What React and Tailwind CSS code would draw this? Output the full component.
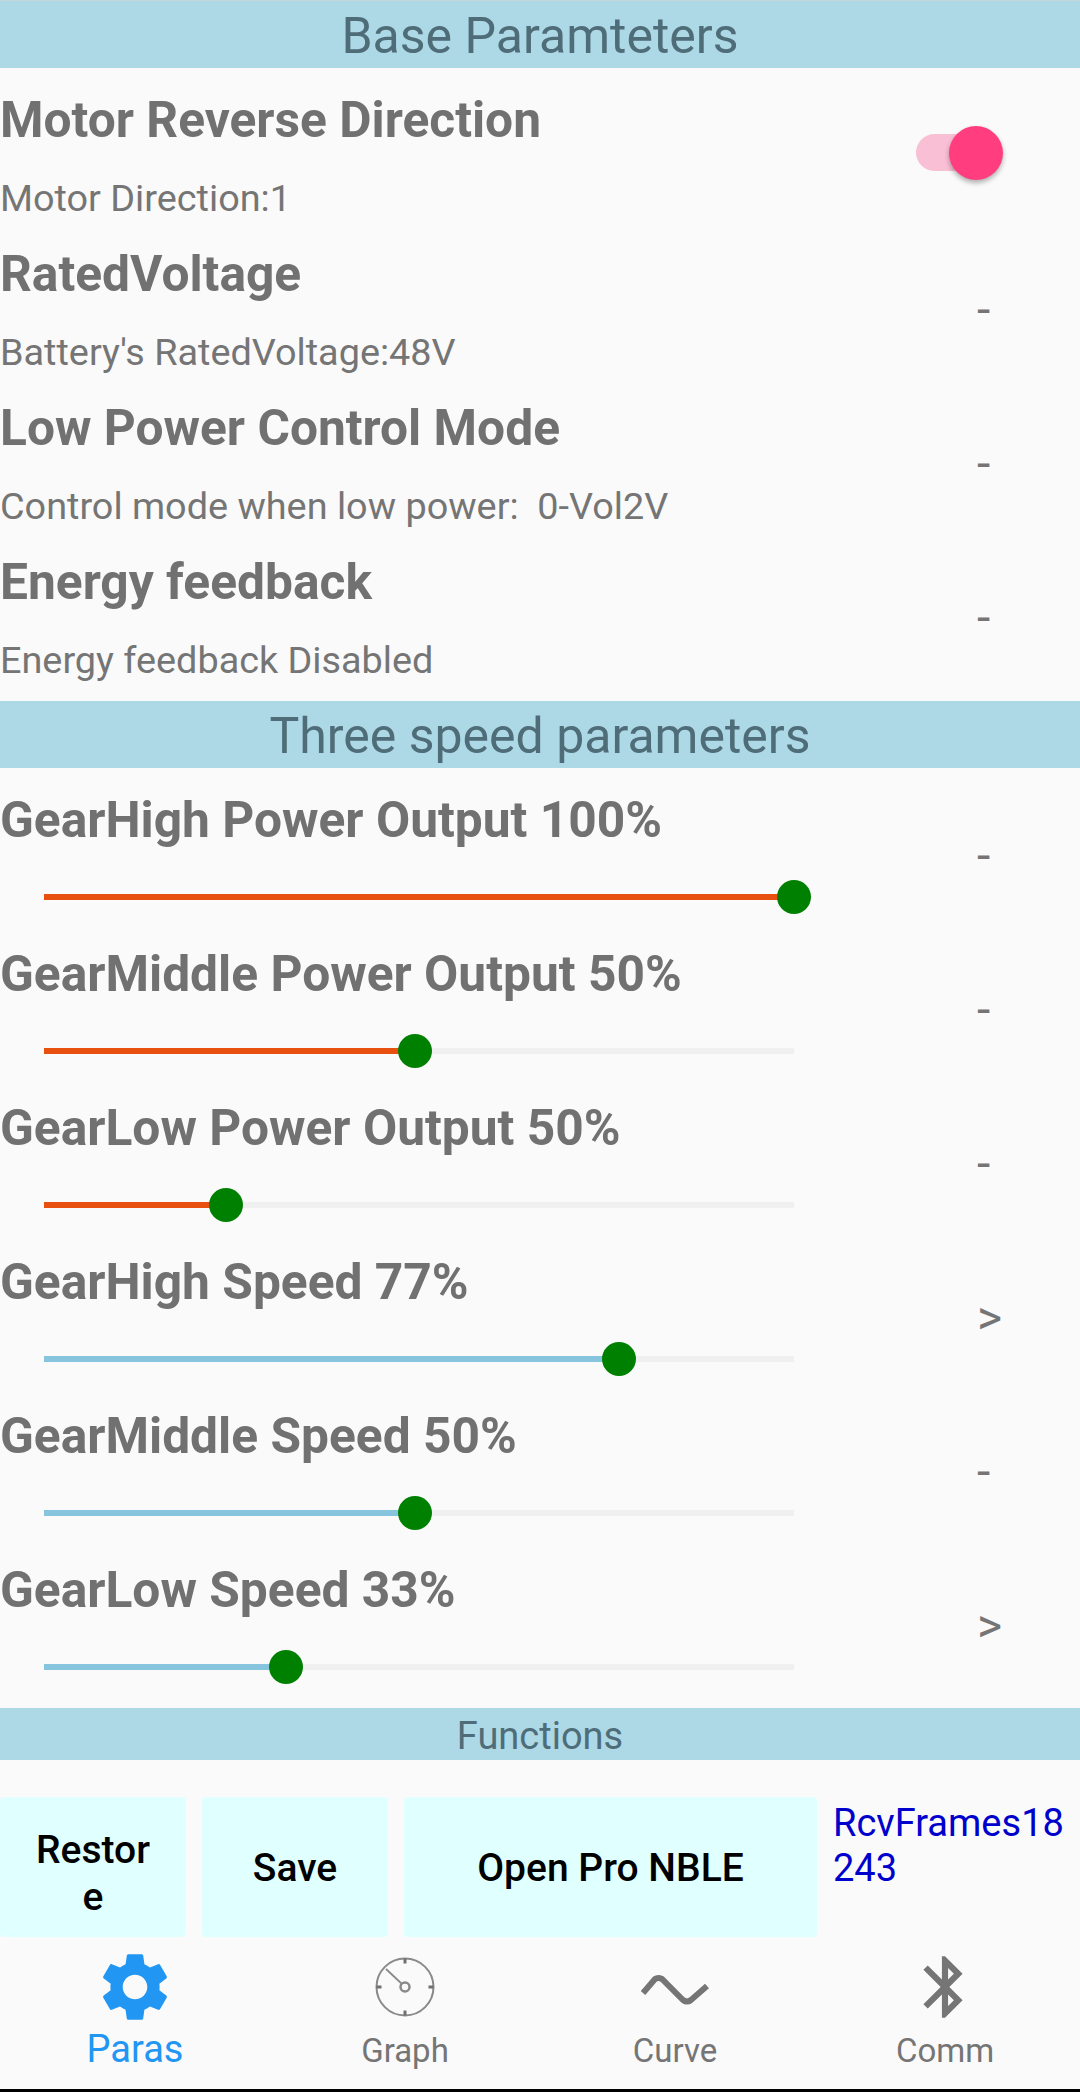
import React from 'react';

const baseParams = [
  { title: 'Motor Reverse Direction', sub: 'Motor Direction:1', toggle: true },
  { title: 'RatedVoltage', sub: "Battery's RatedVoltage:48V", mark: '-' },
  { title: 'Low Power Control Mode', sub: 'Control mode when low power:  0-Vol2V', mark: '-' },
  { title: 'Energy feedback', sub: 'Energy feedback Disabled', mark: '-' },
];

const speedParams = [
  { title: 'GearHigh Power Output 100%', value: 100, fill: 'bg-[#e8500f]', mark: '-' },
  { title: 'GearMiddle Power Output 50%', value: 49.5, fill: 'bg-[#e8500f]', mark: '-' },
  { title: 'GearLow Power Output 50%', value: 24.2, fill: 'bg-[#e8500f]', mark: '-' },
  { title: 'GearHigh Speed 77%', value: 76.7, fill: 'bg-[#87c5de]', mark: '>' },
  { title: 'GearMiddle Speed 50%', value: 49.5, fill: 'bg-[#87c5de]', mark: '-' },
  { title: 'GearLow Speed 33%', value: 32.2, fill: 'bg-[#87c5de]', mark: '>' },
];

const SectionHeader = ({ children }) => (
  <div className="h-[67px] shrink-0 bg-[#add8e6] flex items-center justify-center pt-[3px] text-[50px] leading-none text-[#4f6d78]">
    {children}
  </div>
);

const Mark = ({ children }) => (
  <div className="w-[103px] shrink-0 pb-[10px] text-[48px] leading-none text-[#757575]">{children}</div>
);

const Toggle = () => (
  <div className="relative w-[87px] h-[54px] mr-[77px] mb-[17px] shrink-0">
    <div className="absolute left-0 top-[8px] w-[70px] h-[37px] rounded-full bg-[#f9bfd4]" />
    <div className="absolute right-0 top-0 w-[54px] h-[54px] rounded-full bg-[#ff3d7f] shadow-[0_3px_5px_rgba(0,0,0,0.3)]" />
  </div>
);

const Slider = ({ value, fill }) => (
  <div className="relative ml-[44px] w-[750px] h-[6px] bg-[#f0f0f0]">
    <div className={`h-full ${fill}`} style={{ width: `${value}%` }} />
    <div
      className="absolute top-[-14px] ml-[-17px] w-[34px] h-[34px] rounded-full bg-[#008000]"
      style={{ left: `${value}%` }}
    />
  </div>
);

const Row = ({ title, children, right }) => (
  <div className="h-[154px] flex items-center justify-between">
    <div className="flex-1 min-w-0">
      <div className="h-[72px] text-[49.7px] leading-[73px] font-bold text-[#717171] whitespace-nowrap">{title}</div>
      <div className="h-[82px] flex flex-col justify-center">{children}</div>
    </div>
    {right}
  </div>
);

const ActionButton = ({ className, children }) => (
  <button className={`h-[140px] shrink-0 rounded-[4px] bg-[#e0ffff] text-[39px] leading-[47px] font-medium text-black ${className}`}>
    {children}
  </button>
);

const GearIcon = () => (
  <svg viewBox="0 0 24 24" className="w-[82px] h-[82px] fill-[#2196f3]">
    <path d="M19.14 12.94c.04-.3.06-.61.06-.94 0-.32-.02-.64-.07-.94l2.03-1.58c.18-.14.23-.41.12-.61l-1.92-3.32c-.12-.22-.37-.29-.59-.22l-2.39.96c-.5-.38-1.03-.7-1.62-.94l-.36-2.54c-.04-.24-.24-.41-.48-.41h-3.84c-.24 0-.43.17-.47.41l-.36 2.54c-.59.24-1.13.57-1.62.94l-2.39-.96c-.22-.08-.47 0-.59.22L2.74 8.87c-.12.21-.08.47.12.61l2.03 1.58c-.05.3-.09.63-.09.94s.02.64.07.94l-2.03 1.58c-.18.14-.23.41-.12.61l1.92 3.32c.12.22.37.29.59.22l2.39-.96c.5.38 1.03.7 1.62.94l.36 2.54c.05.24.24.41.48.41h3.84c.24 0 .44-.17.47-.41l.36-2.54c.59-.24 1.13-.56 1.62-.94l2.39.96c.22.08.47 0 .59-.22l1.92-3.32c.12-.22.07-.47-.12-.61l-2.01-1.58zM12 15.6c-1.98 0-3.6-1.62-3.6-3.6s1.62-3.6 3.6-3.6 3.6 1.62 3.6 3.6-1.62 3.6-3.6 3.6z" />
  </svg>
);

const GaugeIcon = () => (
  <svg viewBox="0 0 64 64" className="w-[64px] h-[64px] fill-none stroke-[#8a8a8a]">
    <circle cx="32" cy="32" r="28.5" strokeWidth="2" />
    <circle cx="32" cy="32" r="4.5" strokeWidth="2.5" />
    <path d="M29 29 L13 14" strokeWidth="1.8" />
    <path d="M32 3.5v5M32 55.5v5M3.5 32h5M55.5 32h5" strokeWidth="3" stroke="#707070" />
  </svg>
);

const WaveIcon = () => (
  <svg viewBox="0 0 68 32" className="mt-[6px] w-[68px] h-[32px] fill-none stroke-[#757575]">
    <path d="M2 19 L14 5 Q17 3 21 5 L42 26 Q46 29 50 26 L66 12" strokeWidth="6" />
  </svg>
);

const BluetoothIcon = () => (
  <svg viewBox="0 0 24 24" className="w-[74px] h-[74px] fill-[#757575]">
    <path d="M17.71 7.71L12 2h-1v7.59L6.41 5 5 6.41 10.59 12 5 17.59 6.41 19 11 14.41V22h1l5.71-5.71-4.3-4.29 4.3-4.29zM13 5.83l1.88 1.88L13 9.59V5.83zm1.88 10.46L13 18.17v-3.76l1.88 1.88z" />
  </svg>
);

const Tab = ({ icon, label, active }) => (
  <div className="flex-1 flex flex-col items-center">
    <div className="h-[76px] flex items-center justify-center">{icon}</div>
    <div className={active ? 'mt-[1px] text-[38px] leading-[46px] text-[#2196f3]' : 'mt-[3px] text-[33px] leading-[46px] text-[#757575]'}>
      {label}
    </div>
  </div>
);

export default function App() {
  return (
    <div className="w-[1080px] h-[2092px] flex flex-col overflow-hidden bg-[#fafafa] font-['Roboto',sans-serif]">
      <div className="h-px shrink-0 bg-[#c4d6dc]" />
      <SectionHeader>Base Paramteters</SectionHeader>
      <div className="h-[633px] shrink-0 pt-4">
        {baseParams.map((p) => (
          <Row key={p.title} title={p.title} right={p.toggle ? <Toggle /> : <Mark>{p.mark}</Mark>}>
            <div className="pt-[3px] text-[37.8px] leading-none text-[#757575] whitespace-pre">{p.sub}</div>
          </Row>
        ))}
      </div>
      <SectionHeader>Three speed parameters</SectionHeader>
      <div className="h-[940px] shrink-0 pt-4">
        {speedParams.map((p) => (
          <Row key={p.title} title={p.title} right={<Mark>{p.mark}</Mark>}>
            <Slider value={p.value} fill={p.fill} />
          </Row>
        ))}
      </div>
      <div className="h-[52px] shrink-0 bg-[#add8e6] flex items-center justify-center pt-[3px] text-[38px] leading-none text-[#4f6d78]">
        Functions
      </div>
      <div className="flex gap-4 pt-[37px]">
        <ActionButton className="w-[186px] px-7 pt-[14px] break-all">Restore</ActionButton>
        <ActionButton className="w-[186px] pt-[2px]">Save</ActionButton>
        <ActionButton className="w-[413px] pt-[2px]">Open Pro NBLE</ActionButton>
        <div className="w-[240px] shrink-0 pt-[4px] text-[38px] leading-[45px] text-[#0000cd] break-all">RcvFrames18243</div>
      </div>
      <div className="flex-1 flex pt-[12px]">
        <Tab icon={<GearIcon />} label="Paras" active />
        <Tab icon={<GaugeIcon />} label="Graph" />
        <Tab icon={<WaveIcon />} label="Curve" />
        <Tab icon={<BluetoothIcon />} label="Comm" />
      </div>
      <div className="h-[3px] shrink-0 bg-black" />
    </div>
  );
}
